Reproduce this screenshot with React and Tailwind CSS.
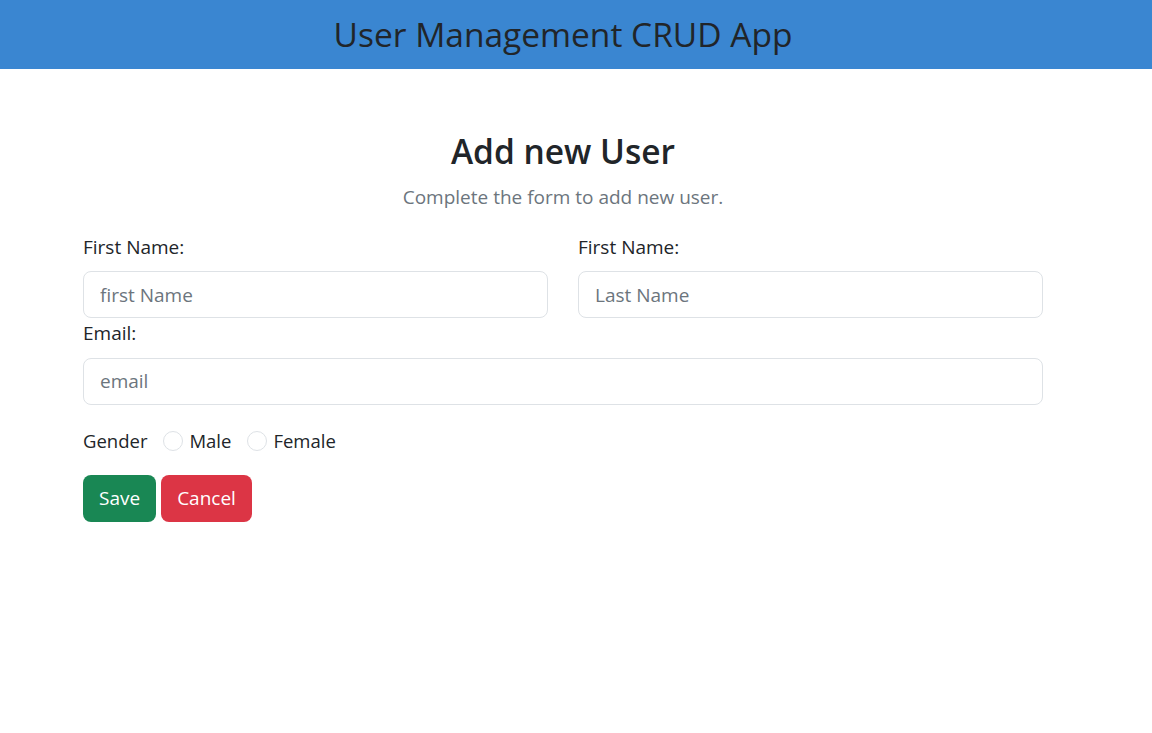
export default function App() {
  return (
    <div className="min-h-screen bg-white font-['Open_Sans',sans-serif] text-[#212529]">
      <header className="h-[69px] bg-[#3a86d1] flex items-center">
        <div className="w-[960px] ml-[83px] text-center">
          <h2 className="text-[33.5px] leading-[1.2]">User Management CRUD App</h2>
        </div>
      </header>

      <main className="w-[960px] ml-[83px]">
        <div className="text-center mt-[62px]">
          <h1 className="text-[33.5px] font-semibold leading-[1.2]">Add new User</h1>
          <p className="mt-[12px] text-[19px] text-[#6c757d] leading-[1.5]">Complete the form to add new user.</p>
        </div>

        <form className="mt-[21px]">
          <div className="grid grid-cols-2 gap-x-[30px]">
            <div>
              <label className="block text-[19px] leading-[1.5] mb-[10px]">First Name:</label>
              <input
                type="text"
                placeholder="first Name"
                className="w-full h-[47px] px-[16px] text-[19px] border border-[#dee2e6] rounded-[8px] placeholder:text-[#6c757d] outline-none"
              />
            </div>
            <div>
              <label className="block text-[19px] leading-[1.5] mb-[10px]">First Name:</label>
              <input
                type="text"
                placeholder="Last Name"
                className="w-full h-[47px] px-[16px] text-[19px] border border-[#dee2e6] rounded-[8px] placeholder:text-[#6c757d] outline-none"
              />
            </div>
          </div>

          <div className="mt-[1px]">
            <label className="block text-[19px] leading-[1.5] mb-[10px]">Email:</label>
            <input
              type="email"
              placeholder="email"
              className="w-full h-[47px] px-[16px] text-[19px] border border-[#dee2e6] rounded-[8px] placeholder:text-[#6c757d] outline-none"
            />
          </div>

          <div className="flex items-center mt-[26px] text-[18.5px] leading-[20px]">
            <span>Gender</span>
            <label className="flex items-center ml-[16px]">
              <span className="w-[20px] h-[20px] rounded-full border border-[#dee2e6] bg-white" />
              <span className="ml-[6px]">Male</span>
            </label>
            <label className="flex items-center ml-[16px]">
              <span className="w-[20px] h-[20px] rounded-full border border-[#dee2e6] bg-white" />
              <span className="ml-[6px]">Female</span>
            </label>
          </div>

          <div className="flex gap-[5px] mt-[24px]">
            <button type="button" className="h-[47px] px-[16px] text-[19px] text-white bg-[#198754] rounded-[8px]">Save</button>
            <button type="button" className="h-[47px] px-[16px] text-[19px] text-white bg-[#dc3545] rounded-[8px]">Cancel</button>
          </div>
        </form>
      </main>
    </div>
  );
}
